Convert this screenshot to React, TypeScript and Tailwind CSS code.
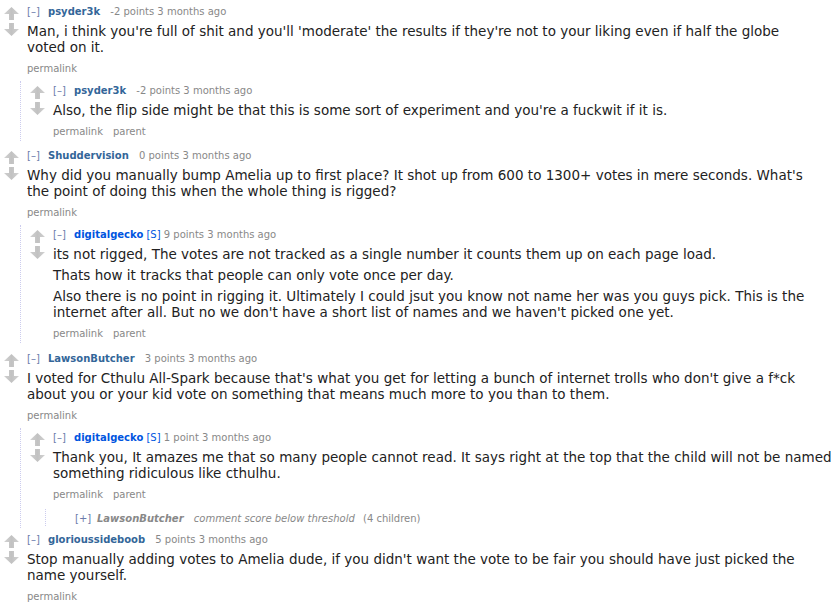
import React from "react";

type C = {
  author: string;
  submitter?: boolean;
  score: string;
  body: string[];
  links: string[];
  children?: C[];
  collapsed?: { author: string; kids: string };
};

const data: C[] = [
  {
    author: "psyder3k",
    score: "-2 points",
    body: [
      "Man, i think you're full of shit and you'll 'moderate' the results if they're not to your liking even if half the globe voted on it.",
    ],
    links: ["permalink"],
    children: [
      {
        author: "psyder3k",
        score: "-2 points",
        body: ["Also, the flip side might be that this is some sort of experiment and you're a fuckwit if it is."],
        links: ["permalink", "parent"],
      },
    ],
  },
  {
    author: "Shuddervision",
    score: "0 points",
    body: [
      "Why did you manually bump Amelia up to first place? It shot up from 600 to 1300+ votes in mere seconds. What's the point of doing this when the whole thing is rigged?",
    ],
    links: ["permalink"],
    children: [
      {
        author: "digitalgecko",
        submitter: true,
        score: "9 points",
        body: [
          "its not rigged, The votes are not tracked as a single number it counts them up on each page load.",
          "Thats how it tracks that people can only vote once per day.",
          "Also there is no point in rigging it. Ultimately I could jsut you know not name her was you guys pick. This is the internet after all. But no we don't have a short list of names and we haven't picked one yet.",
        ],
        links: ["permalink", "parent"],
      },
    ],
  },
  {
    author: "LawsonButcher",
    score: "3 points",
    body: [
      "I voted for Cthulu All-Spark because that's what you get for letting a bunch of internet trolls who don't give a f*ck about you or your kid vote on something that means much more to you than to them.",
    ],
    links: ["permalink"],
    children: [
      {
        author: "digitalgecko",
        submitter: true,
        score: "1 point",
        body: [
          "Thank you, It amazes me that so many people cannot read. It says right at the top that the child will not be named something ridiculous like cthulhu.",
        ],
        links: ["permalink", "parent"],
        collapsed: { author: "LawsonButcher", kids: "(4 children)" },
      },
    ],
  },
  {
    author: "glorioussideboob",
    score: "5 points",
    body: [
      "Stop manually adding votes to Amelia dude, if you didn't want the vote to be fair you should have just picked the name yourself.",
    ],
    links: ["permalink"],
  },
];

function Arrow({ down }: { down?: boolean }) {
  return (
    <svg width="15" height="13" viewBox="0 0 15 13" className={down ? "rotate-180" : ""}>
      <defs>
        <linearGradient id={down ? "gd" : "gu"} x1="0" y1="0" x2="1" y2="0">
          <stop offset="0" stopColor="#d2d2d2" />
          <stop offset="0.5" stopColor="#c2c2c2" />
          <stop offset="1" stopColor="#cfcfcf" />
        </linearGradient>
      </defs>
      <path d="M7.5 0 L15 7 L10 7 L10 13 L5 13 L5 7 L0 7 Z" fill={`url(#${down ? "gd" : "gu"})`} />
    </svg>
  );
}

function Comment({ c, top }: { c: C; top?: boolean }) {
  return (
    <div className="pt-[3px] pb-[2px]">
      <div className={`flex ${top ? "pl-[4px]" : "pl-[9px]"}`}>
        <div className="flex w-[15px] shrink-0 flex-col pt-[2px] gap-[3px]">
          <Arrow />
          <Arrow down />
        </div>
        <div className="ml-[8px] min-w-0">
          <div className="h-[14px] whitespace-nowrap text-[10px] leading-[14px] text-[#888]">
            <span className="inline-block w-[21px] text-[#6b7bab]">[–]</span>
            <span className={`font-bold ${c.submitter ? "text-[#0055df]" : "text-[#336699]"}`}>{c.author}</span>
            {c.submitter ? (
              <>
                {" "}
                <span className="text-[#0055df]">[S]</span>{" "}
              </>
            ) : (
              <span className="ml-[7px]"> </span>
            )}
            <span>{c.score}</span> <span>3 months ago</span>
          </div>
          <div className="mt-[4px] max-w-[780px] text-[13.5px] leading-[16px] text-[#222]">
            {c.body.map((p, i) => (
              <p key={i} className={i > 0 ? "mt-[5px]" : ""}>
                {p}
              </p>
            ))}
          </div>
          <div className="mt-[7px] flex h-[14px] gap-[10px] text-[10px] leading-[14px] text-[#888]">
            {c.links.map((l) => (
              <span key={l}>{l}</span>
            ))}
          </div>
        </div>
      </div>
      {c.children && (
        <div className="ml-[20px] mt-[5px] border-l border-dotted border-[#ccccee]">
          {c.children.map((k, i) => (
            <Comment key={i} c={k} />
          ))}
        </div>
      )}
      {c.collapsed && (
        <div className="ml-[24px] mt-[7px] border-l border-dotted border-[#ccccee]">
          <div className="pt-[3px] pl-[29px]">
            <div className="h-[14px] whitespace-nowrap text-[10px] leading-[14px] text-[#888]">
              <span className="inline-block w-[22px] text-[#6b7bab]">[+]</span>
              <span className="font-bold italic">{c.collapsed.author}</span>
              <span className="ml-[7px] italic"> comment score below threshold</span>
              <span className="ml-[5px]"> {c.collapsed.kids}</span>
            </div>
          </div>
        </div>
      )}
    </div>
  );
}

const gaps = ["", "mt-[3px]", "mt-[4px]", "mt-0"];

export default function App() {
  return (
    <div
      className="min-h-[609px] w-[837px] bg-white pt-[2px]"
      style={{ fontFamily: "'DejaVu Sans', Verdana, sans-serif" }}
    >
      {data.map((c, i) => (
        <div key={i} className={gaps[i]}>
          <Comment c={c} top />
        </div>
      ))}
    </div>
  );
}
